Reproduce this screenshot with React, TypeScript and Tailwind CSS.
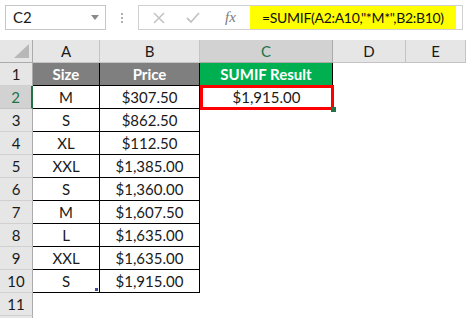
const sizes = ["Size", "M", "S", "XL", "XXL", "S", "M", "L", "XXL", "S"];
const prices = [
  "Price",
  "$307.50",
  "$862.50",
  "$112.50",
  "$1,385.00",
  "$1,360.00",
  "$1,607.50",
  "$1,635.00",
  "$1,635.00",
  "$1,915.00",
];

const cols = ["A", "B", "C", "D", "E"];

const font = { fontFamily: "Lato, 'Liberation Sans', sans-serif" };

const App = () => {
  return (
    <div
      className="w-[466px] h-[318px] overflow-hidden bg-white text-[15px] text-[#1a1a1a]"
      style={font}
    >
      {/* formula bar */}
      <div className="flex items-start h-[40px] pt-[5px] pl-[5px]">
        <div className="w-[101px] h-[25px] border border-[#c6c6c6] flex items-center justify-between pl-[7px] pr-[6px]">
          <span>C2</span>
          <svg width="8" height="5" viewBox="0 0 8 5">
            <path d="M0 0 L8 0 L4 5 Z" fill="#8a8a8a" />
          </svg>
        </div>
        <div className="w-[32px] h-[25px] flex flex-col items-center justify-center gap-[2px]">
          <div className="w-[2px] h-[2px] bg-[#b0b0b0]" />
          <div className="w-[2px] h-[2px] bg-[#b0b0b0]" />
          <div className="w-[2px] h-[2px] bg-[#b0b0b0]" />
        </div>
        <div className="w-[325px] h-[25px] border border-[#d0d0d0] flex items-stretch">
          <div className="w-[111px] flex items-center">
            <svg width="12" height="12" viewBox="0 0 12 12" className="ml-[14px]">
              <path d="M1 1 L11 11 M11 1 L1 11" stroke="#c4c4c4" strokeWidth="1.6" />
            </svg>
            <svg width="14" height="12" viewBox="0 0 14 12" className="ml-[21px]">
              <path d="M1 6 L5 10 L13 1" stroke="#c4c4c4" strokeWidth="1.8" fill="none" />
            </svg>
            <span
              className="ml-[25px] text-[15px] italic text-[#7a7a7a]"
              style={{ fontFamily: "'Liberation Serif', serif" }}
            >
              fx
            </span>
          </div>
          <div className="w-[206px] bg-[#ffff00] flex items-center pl-[12px] text-[14px] tracking-[-0.3px] text-[#111]">
            =SUMIF(A2:A10,"*M*",B2:B10)
          </div>
        </div>
      </div>

      {/* sheet */}
      <div className="grid grid-cols-[33px_67px_100px_133px_73px_60px] auto-rows-[23px]">
        {/* column headers */}
        <div className="bg-[#e6e6e6] border-r border-b border-[#ababab] flex items-end justify-end pr-[3px] pb-[4px]">
          <svg width="15" height="14" viewBox="0 0 15 14">
            <path d="M15 0 L15 14 L0 14 Z" fill="#b8b8b8" />
          </svg>
        </div>
        {cols.map((c) =>
          c === "C" ? (
            <div
              key={c}
              className="bg-[#d2d2d2] border-r border-b border-[#ababab] flex items-center justify-center text-[#217346]"
            >
              {c}
            </div>
          ) : (
            <div
              key={c}
              className="bg-[#e6e6e6] border-r border-b border-[#c4c4c4] flex items-center justify-center"
            >
              {c}
            </div>
          )
        )}

        {/* rows */}
        {sizes.map((s, i) => {
          const row = i + 1;
          const head = i === 0;
          return [
            <div
              key={`h${row}`}
              className={
                row === 2
                  ? "bg-[#d2d2d2] border-r-2 border-b border-r-[#217346] border-b-[#c4c4c4] flex items-center justify-center text-[#217346]"
                  : "bg-[#e6e6e6] border-r border-b border-r-[#ababab] border-b-[#d0d0d0] flex items-center justify-center"
              }
            >
              {row}
            </div>,
            <div
              key={`a${row}`}
              className={
                head
                  ? "relative bg-[#7f7f7f] border-r border-b border-black flex items-center justify-center font-bold text-white"
                  : "relative border-r border-b border-black flex items-center justify-center"
              }
            >
              {s}
              {row === 10 && (
                <div className="absolute right-[1px] bottom-[1px] w-[3px] h-[3px] bg-[#3d4f9a]" />
              )}
            </div>,
            <div
              key={`b${row}`}
              className={
                head
                  ? "bg-[#7f7f7f] border-r border-b border-black flex items-center justify-center font-bold text-white"
                  : "border-r border-b border-black flex items-center justify-center"
              }
            >
              {prices[i]}
            </div>,
            row === 1 ? (
              <div
                key={`c${row}`}
                className="bg-[#00b050] border-r border-black flex items-center justify-center font-bold text-white"
              >
                SUMIF Result
              </div>
            ) : row === 2 ? (
              <div key={`c${row}`} className="relative flex items-center justify-center">
                $1,915.00
                <div className="absolute -top-[1px] left-0 -right-[1px] -bottom-[1px] border-[3px] border-[#ff0000]" />
                <div className="absolute -right-[3px] -bottom-[3px] w-[5px] h-[5px] bg-[#217346]" />
              </div>
            ) : (
              <div key={`c${row}`} />
            ),
            <div key={`d${row}`} />,
            <div key={`e${row}`} />,
          ];
        })}

        {/* row 11 */}
        <div className="bg-[#e6e6e6] border-r border-b border-r-[#ababab] border-b-[#d0d0d0] flex items-center justify-center">
          11
        </div>
        <div className="col-span-5" />
        <div className="bg-[#e6e6e6] border-r border-[#ababab]" />
      </div>
    </div>
  );
};

export default App;
